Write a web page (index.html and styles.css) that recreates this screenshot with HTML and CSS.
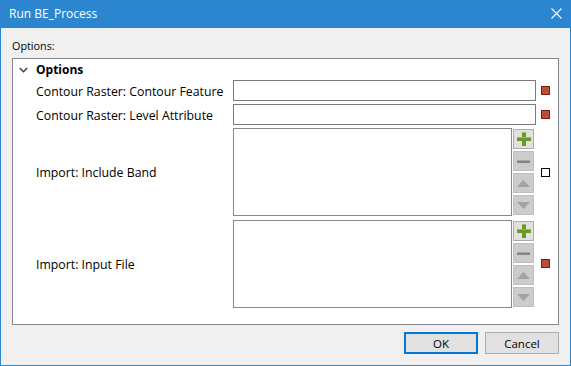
FILE: index.html
```html
<!DOCTYPE html>
<html>
<head>
    <title>Run BE_Process</title>
    <link rel="stylesheet" href="styles.css">
</head>
<body>
    <div class="window">
        <div class="titlebar">
            <span class="title">Run BE_Process</span>
            <svg class="close" width="11" height="11" viewBox="0 0 11 11">
                <path d="M0.5 0.5 L10.5 10.5 M10.5 0.5 L0.5 10.5" stroke="#fff" stroke-width="1.1" fill="none"/>
            </svg>
        </div>
        <div class="content">
            <div class="caption">Options:</div>
            <div class="panel">
                <div class="group-head">
                    <svg class="chevron" width="9" height="6" viewBox="0 0 9 6">
                        <path d="M0.8 1 L4.5 4.7 L8.2 1" stroke="#3c3c3c" stroke-width="1.5" fill="none"/>
                    </svg>
                    <span>Options</span>
                </div>
                <div class="rows">
                    <label class="row-label">Contour Raster: Contour Feature</label>
                    <div class="text-field"></div>
                    <span class="marker required"></span>

                    <label class="row-label">Contour Raster: Level Attribute</label>
                    <div class="text-field"></div>
                    <span class="marker required"></span>

                    <label class="row-label">Import: Include Band</label>
                    <div class="list-field">
                        <div class="list-box"></div>
                        <div class="list-buttons">
                            <button class="tool-btn">
                                <svg width="14" height="14" viewBox="0 0 14 14"><path d="M5 0 H9 V5 H14 V9 H9 V14 H5 V9 H0 V5 H5 Z" fill="#6a9a26"/><path d="M5 0 H9 V1 H5 Z M0 5 H14 V6 H0 Z" fill="#93c04f"/></svg>
                            </button>
                            <button class="tool-btn off">
                                <svg width="13" height="3" viewBox="0 0 13 3"><rect width="13" height="3" fill="#858585"/><rect y="0" width="13" height="1" fill="#a5a5a5"/></svg>
                            </button>
                            <button class="tool-btn off">
                                <svg width="13" height="7" viewBox="0 0 13 7"><path d="M6.5 0 L13 7 H0 Z" fill="#a3a3a3"/></svg>
                            </button>
                            <button class="tool-btn off">
                                <svg width="13" height="7" viewBox="0 0 13 7"><path d="M0 0 H13 L6.5 7 Z" fill="#a3a3a3"/></svg>
                            </button>
                        </div>
                    </div>
                    <span class="marker optional"></span>

                    <label class="row-label">Import: Input File</label>
                    <div class="list-field">
                        <div class="list-box"></div>
                        <div class="list-buttons">
                            <button class="tool-btn">
                                <svg width="14" height="14" viewBox="0 0 14 14"><path d="M5 0 H9 V5 H14 V9 H9 V14 H5 V9 H0 V5 H5 Z" fill="#6a9a26"/><path d="M5 0 H9 V1 H5 Z M0 5 H14 V6 H0 Z" fill="#93c04f"/></svg>
                            </button>
                            <button class="tool-btn off">
                                <svg width="13" height="3" viewBox="0 0 13 3"><rect width="13" height="3" fill="#858585"/><rect y="0" width="13" height="1" fill="#a5a5a5"/></svg>
                            </button>
                            <button class="tool-btn off">
                                <svg width="13" height="7" viewBox="0 0 13 7"><path d="M6.5 0 L13 7 H0 Z" fill="#a3a3a3"/></svg>
                            </button>
                            <button class="tool-btn off">
                                <svg width="13" height="7" viewBox="0 0 13 7"><path d="M0 0 H13 L6.5 7 Z" fill="#a3a3a3"/></svg>
                            </button>
                        </div>
                    </div>
                    <span class="marker required"></span>
                </div>
            </div>
            <div class="actions">
                <button class="dlg-btn default">OK</button>
                <button class="dlg-btn">Cancel</button>
            </div>
        </div>
    </div>
</body>
</html>
```

FILE: styles.css
```css
html, body {
    margin: 0;
    padding: 0;
}
body {
    font-family: "Open Sans", "Noto Sans", sans-serif;
    font-size: 12.3px;
    color: #000;
    background-color: #f0f0f0;
}
.window {
    width: 571px;
    height: 366px;
    box-sizing: border-box;
    border: 1px solid #2b86cf;
    border-top: none;
    background-color: #f0f0f0;
    display: flex;
    flex-direction: column;
}
.titlebar {
    height: 28px;
    margin: 0 -1px;
    background-color: #2b86cf;
    display: flex;
    align-items: center;
    justify-content: space-between;
    padding: 0 9px 0 9px;
    flex-shrink: 0;
}
.title {
    color: #fff;
    font-size: 12px;
    padding-bottom: 1px;
}
.close {
    display: block;
    margin-bottom: 2px;
}
.content {
    flex: 1;
    padding: 10px 11px 0 11px;
    display: flex;
    flex-direction: column;
}
.caption {
    height: 16px;
    line-height: 16px;
    font-size: 10.8px;
}
.panel {
    margin-top: 4px;
    height: 267px;
    box-sizing: border-box;
    border: 1px solid #828790;
    background-color: #fff;
    padding: 3px 0 0 23px;
}
.group-head {
    height: 16px;
    line-height: 16px;
    font-weight: bold;
    font-size: 12px;
    position: relative;
}
.chevron {
    position: absolute;
    left: -17px;
    top: 5px;
}
.rows {
    margin-top: 2px;
    display: grid;
    grid-template-columns: 197px 303px 14px;
    grid-template-rows: 21px 21px 88px 89px;
    row-gap: 3px;
    align-items: center;
}
.row-label {
    white-space: nowrap;
    padding-top: 1px;
}
.text-field {
    height: 21px;
    box-sizing: border-box;
    border: 1px solid #7a7a7a;
    background-color: #fff;
}
.list-field {
    display: flex;
    height: 88px;
    align-self: end;
}
.list-box {
    width: 279px;
    height: 88px;
    box-sizing: border-box;
    border: 1px solid #828790;
}
.list-buttons {
    margin-left: 1px;
    padding-top: 1px;
    display: flex;
    flex-direction: column;
    gap: 2px;
}
.tool-btn {
    width: 21px;
    height: 20px;
    padding: 0;
    margin: 0;
    box-sizing: border-box;
    border: 1px solid #adadad;
    background-color: #e1e1e1;
    display: flex;
    align-items: center;
    justify-content: center;
}
.tool-btn svg {
    display: block;
}
.tool-btn.off {
    border-color: #bfbfbf;
    background-color: #cccccc;
}
.marker {
    width: 9px;
    height: 9px;
    box-sizing: border-box;
    margin-left: 5px;
}
.marker.required {
    background-color: #bd4b3a;
    border: 1px solid #7d1c12;
}
.marker.optional {
    background-color: #fff;
    border: 1px solid #000;
}
.actions {
    margin-top: 7px;
    display: flex;
    justify-content: flex-end;
    gap: 7px;
}
.dlg-btn {
    width: 74px;
    height: 22px;
    box-sizing: border-box;
    border: 1px solid #adadad;
    background-color: #e1e1e1;
    font-family: "Open Sans", "Noto Sans", sans-serif;
    font-size: 11.5px;
    color: #000;
    padding: 0;
}
.dlg-btn.default {
    border: 2px solid #0078d7;
}
```
